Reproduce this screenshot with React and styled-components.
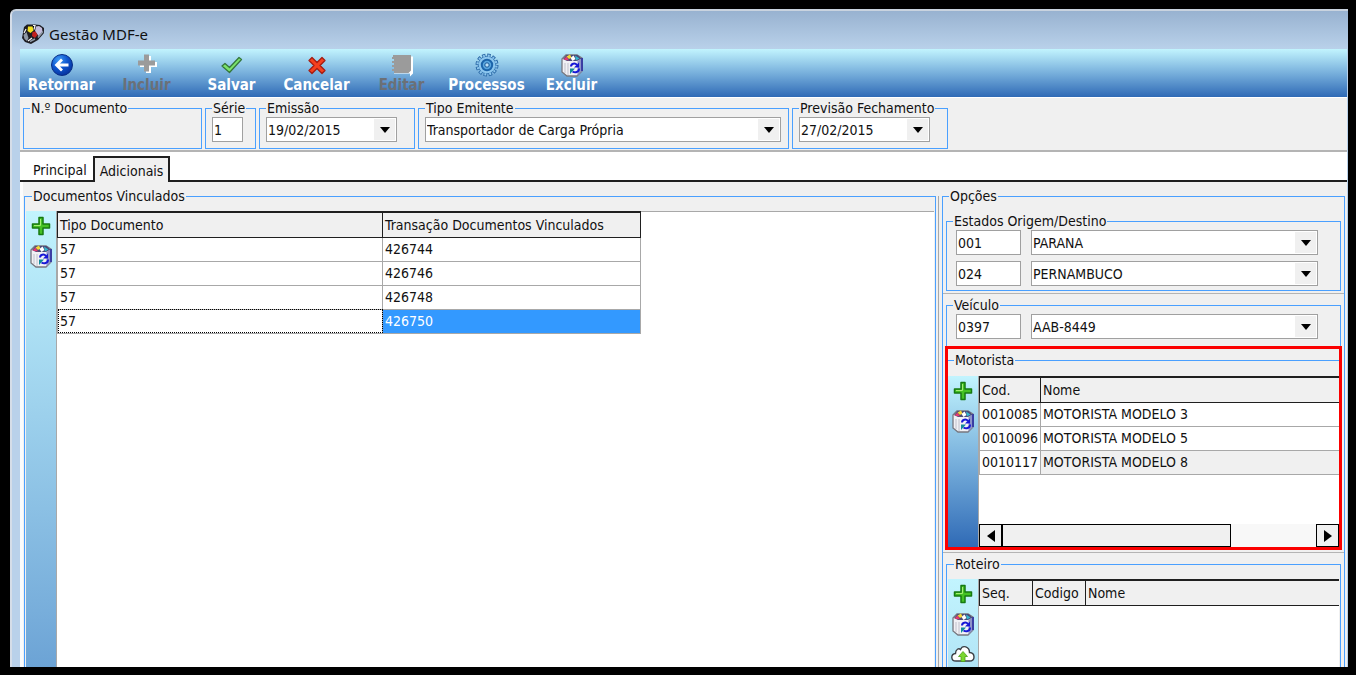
import React from "react";
import styled, { createGlobalStyle, css } from "styled-components";

const documents = ["426744", "426746", "426748", "426750"];

const drivers = [
  { code: "0010085", name: "MOTORISTA MODELO 3" },
  { code: "0010096", name: "MOTORISTA MODELO 5" },
  { code: "0010117", name: "MOTORISTA MODELO 8" }
];

const BackIcon = () => (
  <svg width="24" height="24" viewBox="0 0 24 24">
    <defs>
      <radialGradient id="back" cx="35%" cy="25%" r="80%">
        <stop offset="0" stopColor="#3f9bf5" />
        <stop offset="0.5" stopColor="#0f57cf" />
        <stop offset="1" stopColor="#06309c" />
      </radialGradient>
    </defs>
    <circle cx="12" cy="12" r="10.5" fill="url(#back)" stroke="#0a2f86" />
    <path
      d="M18.500 12H7M12 6.500L6.500 12l5.500 5.500"
      fill="none"
      stroke="#fff"
      strokeWidth="2.800"
    />
  </svg>
);

const PlusIcon = ({ disabled }) => (
  <svg width="22" height="22" viewBox="0 0 22 22">
    {disabled ? (
      <>
        <path d="M10 3h5v6h6v5h-6v6h-5v-6H4V9h6z" fill="#fff" />
        <path d="M8 1.500h5v6h6v5h-6v6H8v-6H2v-5h6z" fill="#9b9b9b" />
      </>
    ) : (
      <>
        <path
          d="M9 2.500h4V9h6.500v4H13v6.500H9V13H2.500V9H9z"
          fill="#45c224"
          stroke="#177a12"
          strokeWidth="1.500"
          strokeLinejoin="round"
        />
        <path d="M10.500 4v6.500H4" fill="none" stroke="#a5ee75" />
      </>
    )}
  </svg>
);

const CheckIcon = () => (
  <svg width="24" height="24" viewBox="0 0 24 24">
    <path
      d="M2 13l3-2.500 4.500 4L19 4.500l2.500 2L9.500 19.500z"
      fill="#7be36b"
      stroke="#35763c"
      strokeWidth="1.300"
      strokeLinejoin="round"
    />
  </svg>
);

const CancelIcon = () => (
  <svg width="24" height="24" viewBox="0 0 24 24">
    <path
      d="M7 4.500l5 5 5-5L20 7.500l-5 5 5 5-3 3-5-5-5 5-3-3 5-5-5-5z"
      fill="#f5401f"
      stroke="#a51c12"
      strokeWidth="1.300"
      strokeLinejoin="round"
    />
  </svg>
);

const NoteIcon = () => (
  <svg width="24" height="24" viewBox="0 0 24 24">
    <path d="M4 3.500h19v17l-3 3v-3H4z" fill="#fff" />
    <path
      d="M3 2h18v15.500L18.500 20H4v-2H2v-2h2v-2H2v-2h2v-2H2V8h2V6H2V4h1z"
      fill="#9b9b9b"
    />
  </svg>
);

const GearIcon = () => (
  <svg width="24" height="24" viewBox="0 0 24 24">
    <circle
      cx="12"
      cy="12"
      r="9.500"
      fill="none"
      stroke="#2a68a6"
      strokeWidth="4"
      strokeDasharray="3.200 1.770"
    />
    <circle cx="12" cy="12" r="8.800" fill="#8cc6ee" stroke="#3a7ab5" />
    <circle
      cx="12"
      cy="12"
      r="9.500"
      fill="none"
      stroke="#8cc6ee"
      strokeWidth="2.200"
      strokeDasharray="1.800 3.170"
      strokeDashoffset="-0.700"
    />
    <circle
      cx="12"
      cy="12"
      r="5.200"
      fill="#5aa7e0"
      stroke="#1c64aa"
      strokeWidth="2"
    />
    <circle cx="12" cy="12" r="2.200" fill="#b9e0f8" stroke="#1a5796" />
  </svg>
);

const BinIcon = () => (
  <svg width="24" height="24" viewBox="0 0 24 24">
    <path
      d="M2 6l4-4h11l5 3v13l-5 5H7l-5-4z"
      fill="#f1f1f5"
      stroke="#77777f"
      strokeWidth="1.300"
    />
    <path d="M17.500 8L22 5v13l-4.500 4.500z" fill="#8d93c8" />
    <path d="M22 5v13" stroke="#20209c" strokeWidth="1.500" />
    <path d="M5 10v10M8 10v12" stroke="#c9c9d2" strokeWidth="1.200" />
    <path d="M3 6l3.500-4h11l4 3.500L17 8H7z" fill="#4a4a78" />
    <path d="M3.500 6.500l3-3 2.500 4z" fill="#e83a6f" />
    <path d="M6.500 3.500l3.500-2 1.500 3-2.500 1.500z" fill="#f5d735" />
    <path d="M10.500 5l3-2.500 2 3.500-3 2z" fill="#fff" />
    <path d="M15 2.500l4.500 3-3.500 2z" fill="#32b6cf" />
    <path
      d="M11 13.500c0-3 4-4 6-1.500M19 15.500c0 4-4 4.500-6.500 3"
      fill="none"
      stroke="#1717d6"
      strokeWidth="2"
    />
    <path d="M19 9.500v5h-5z" fill="#1717d6" />
    <path d="M10 15.500h5l-5 5.500z" fill="#128a9c" />
  </svg>
);

const CloudIcon = () => (
  <svg width="24" height="20" viewBox="0 0 24 20">
    <path
      d="M5 17c-5.500 0-5.500-7-.5-7.500C4.500 5 8 4 9.500 5.500c2-5 9-3 9 3 6 .5 6 8.500 0 8.500z"
      fill="#fff"
      stroke="#3b3f45"
      strokeWidth="1.400"
    />
    <path
      d="M12 7.500l4.500 5H14v5h-4v-5H7.500z"
      fill="#79d62e"
      stroke="#4d9e1b"
      strokeWidth="0.800"
    />
  </svg>
);

const AppIcon = () => (
  <svg width="23" height="20" viewBox="0 0 23 20">
    <path d="M2 3l3-2.500h8l5 .5 4 3v5l-6 7-7 4-6-2-3-4z" fill="#1d1d22" />
    <path d="M1.500 11l3-3 2 6-1.500 3-2.500-2z" fill="#8e99a6" />
    <path d="M6 2.500h4.500l1 4-3 2.500-3-2z" fill="#f4e21f" />
    <path d="M4 5l-2 4M11 1.500h2l-1 4M6 17l4-3" stroke="#f3f3f3" strokeWidth="1.200" />
    <path d="M14 2.500l3-.5 3 2 .5 4-4 4-3.500-5z" fill="#c3bcdc" />
    <path d="M10.500 8l3-.5 2 3.500-2.500 3-3-2z" fill="#c3201d" />
    <path d="M8 17.500l5-2.500M16 13.500l5-6" stroke="#8e99a6" strokeWidth="1.500" />
  </svg>
);

const Arrow = () => (
  <svg width="10" height="6" viewBox="0 0 10 6">
    <path d="M0 0h10L5 6z" fill="#000" />
  </svg>
);

const ScrollArrow = ({ right }) => (
  <svg width="8" height="12" viewBox="0 0 8 12">
    <path d={right ? "M0 0v12l8-6z" : "M8 0v12L0 6z"} fill="#000" />
  </svg>
);

const toolbar = [
  { label: "Retornar", icon: <BackIcon /> },
  { label: "Incluir", icon: <PlusIcon disabled />, disabled: true },
  { label: "Salvar", icon: <CheckIcon /> },
  { label: "Cancelar", icon: <CancelIcon /> },
  { label: "Editar", icon: <NoteIcon />, disabled: true },
  { label: "Processos", icon: <GearIcon /> },
  { label: "Excluir", icon: <BinIcon /> }
];

const Combo = ({ label, value, width }) => (
  <ComboBox $width={width}>
    <Select aria-label={label} defaultValue={value}>
      <option>{value}</option>
    </Select>
    <ComboArrow>
      <Arrow />
    </ComboArrow>
  </ComboBox>
);

const SideActions = ({ upload, short }) => (
  <SideBar $short={short}>
    <IconButton type="button" aria-label="Incluir item">
      <PlusIcon />
    </IconButton>
    <IconButton type="button" aria-label="Excluir item">
      <BinIcon />
    </IconButton>
    {upload && (
      <IconButton type="button" aria-label="Enviar">
        <CloudIcon />
      </IconButton>
    )}
  </SideBar>
);

export default function App() {
  return (
    <Screen>
      <GlobalStyle />
      <Window>
        <TitleBar>
          <AppIcon />
          <Title>Gestão MDF-e</Title>
        </TitleBar>
        <Content>
          <ToolBar>
            {toolbar.map(({ label, icon, disabled }) => (
              <ToolButton key={label} type="button" disabled={disabled}>
                {icon}
                {label}
              </ToolButton>
            ))}
          </ToolBar>

          <Header>
            <Group $width={179}>
              <Legend>N.º Documento</Legend>
            </Group>
            <Group $width={51}>
              <Legend>Série</Legend>
              <Fields>
                <Input aria-label="Série" defaultValue="1" $width={31} />
              </Fields>
            </Group>
            <Group $width={156}>
              <Legend>Emissão</Legend>
              <Fields>
                <Combo label="Emissão" value="19/02/2015" width={131} />
              </Fields>
            </Group>
            <Group $width={371}>
              <Legend>Tipo Emitente</Legend>
              <Fields>
                <Combo
                  label="Tipo Emitente"
                  value="Transportador de Carga Própria"
                  width={356}
                />
              </Fields>
            </Group>
            <Group $width={156}>
              <Legend>Previsão Fechamento</Legend>
              <Fields>
                <Combo
                  label="Previsão Fechamento"
                  value="27/02/2015"
                  width={131}
                />
              </Fields>
            </Group>
          </Header>

          <Tabs role="tablist">
            <Tab type="button" role="tab" aria-selected="false">
              Principal
            </Tab>
            <Tab type="button" role="tab" aria-selected="true" $active>
              Adicionais
            </Tab>
          </Tabs>

          <Body>
            <Documents>
              <Legend>Documentos Vinculados</Legend>
              <Panel>
                <SideActions />
                <TableArea>
                  <Table $width="584px">
                    <colgroup>
                      <col width="325" />
                      <col />
                    </colgroup>
                    <thead>
                      <tr>
                        <Th>Tipo Documento</Th>
                        <Th>Transação Documentos Vinculados</Th>
                      </tr>
                    </thead>
                    <tbody>
                      {documents.map((number, i) => {
                        const selected = i === documents.length - 1;
                        return (
                          <tr key={number}>
                            <Td $focused={selected}>57</Td>
                            <Td $selected={selected}>{number}</Td>
                          </tr>
                        );
                      })}
                    </tbody>
                  </Table>
                </TableArea>
              </Panel>
            </Documents>

            <Options>
              <Legend>Opções</Legend>
              <OptionGroup>
                <Legend>Estados Origem/Destino</Legend>
                <OptionRows>
                  <OptionRow>
                    <Input aria-label="Código origem" defaultValue="001" />
                    <Combo label="Estado origem" value="PARANA" />
                  </OptionRow>
                  <OptionRow>
                    <Input aria-label="Código destino" defaultValue="024" />
                    <Combo label="Estado destino" value="PERNAMBUCO" />
                  </OptionRow>
                </OptionRows>
              </OptionGroup>
              <Divider />
              <OptionGroup $open>
                <Legend>Veículo</Legend>
                <OptionRows>
                  <OptionRow>
                    <Input aria-label="Código veículo" defaultValue="0397" />
                    <Combo label="Veículo" value="AAB-8449" />
                  </OptionRow>
                </OptionRows>
              </OptionGroup>

              <Highlight>
                <DriverGroup>
                  <Legend>Motorista</Legend>
                  <Panel>
                    <SideActions short />
                    <TableArea $height={171}>
                      <Table $width="100%" $wide>
                        <colgroup>
                          <col width="61" />
                          <col />
                        </colgroup>
                        <thead>
                          <tr>
                            <Th>Cod.</Th>
                            <Th>Nome</Th>
                          </tr>
                        </thead>
                        <tbody>
                          {drivers.map(({ code, name }, i) => (
                            <tr key={code}>
                              <Td>{code}</Td>
                              <Td $muted={i === 2}>{name}</Td>
                            </tr>
                          ))}
                        </tbody>
                      </Table>
                      <ScrollBar>
                        <ScrollButton type="button" aria-label="Esquerda">
                          <ScrollArrow />
                        </ScrollButton>
                        <ScrollTrack>
                          <ScrollThumb />
                        </ScrollTrack>
                        <ScrollButton type="button" aria-label="Direita">
                          <ScrollArrow right />
                        </ScrollButton>
                      </ScrollBar>
                    </TableArea>
                  </Panel>
                </DriverGroup>
              </Highlight>
              <Divider />

              <RouteGroup>
                <Legend>Roteiro</Legend>
                <Panel>
                  <SideActions upload />
                  <TableArea>
                    <Table $width="100%" $wide>
                      <colgroup>
                        <col width="53" />
                        <col width="53" />
                        <col />
                      </colgroup>
                      <thead>
                        <tr>
                          <Th>Seq.</Th>
                          <Th>Codigo</Th>
                          <Th>Nome</Th>
                        </tr>
                      </thead>
                    </Table>
                  </TableArea>
                </Panel>
              </RouteGroup>
            </Options>
          </Body>
        </Content>
      </Window>
    </Screen>
  );
}

const GlobalStyle = createGlobalStyle`
  * {
    box-sizing: border-box;
  }
  body {
    margin: 0;
    background: #000;
    color: #111;
    font-family: "DejaVu Sans Condensed", "DejaVu Sans", sans-serif;
    font-size: 14px;
    line-height: 16px;
  }
  svg {
    display: block;
    flex: none;
  }
  button, input, select {
    font: inherit;
    color: inherit;
  }
`;

const Screen = styled.main`
  display: flex;
  height: 100vh;
  padding: 9px 8px 8px 10px;
  background: #000;
`;

const Window = styled.div`
  display: flex;
  flex: 1;
  flex-direction: column;
  min-width: 0;
  overflow: hidden;
  padding: 0 1px 0 8px;
  border-left: 2px solid #d5dde8;
  border-top: 2px solid #c9d3df;
  border-top-left-radius: 6px;
  background: linear-gradient(#98b2d0, #b9d1ea 38px);
`;

const TitleBar = styled.header`
  display: flex;
  align-items: center;
  gap: 4px;
  height: 38px;
  padding: 7px 2px 0;
`;

const Title = styled.h1`
  margin: 0;
  font-family: "Noto Sans", sans-serif;
  font-size: 15px;
  font-weight: normal;
  line-height: 20px;
`;

const Content = styled.div`
  display: flex;
  flex: 1;
  flex-direction: column;
  min-height: 0;
  background: #f0f0f0;
`;

const ToolBar = styled.nav`
  display: flex;
  gap: 2px;
  height: 48px;
  background: linear-gradient(#c2f4fe, #78b0dc 50%, #2f6ab6);
`;

const ToolButton = styled.button`
  display: flex;
  flex-direction: column;
  align-items: center;
  justify-content: space-between;
  width: 83px;
  padding: 4px 0;
  border: 0;
  background: none;
  color: #fff;
  font-size: 15px;
  font-weight: bold;
  line-height: 16px;

  &:disabled {
    color: #6b7077;
  }
`;

const Header = styled.div`
  display: flex;
  gap: 3px;
  padding: 2px 3px 1px;
  border-top: 1px solid #fff;
  border-bottom: 2px solid #b4b4b4;
`;

const Group = styled.fieldset`
  min-width: 0;
  width: ${props => props.$width}px;
  min-height: 49px;
  margin: 0;
  padding: 0;
  border: 1px solid #4aa0ff;
`;

const Legend = styled.legend`
  margin-left: 6px;
  padding: 0 1px;
  white-space: nowrap;
`;

const Fields = styled.div`
  display: flex;
  padding: 1px 6px 0;
`;

const control = css`
  height: 25px;
  border: 1px solid #a0a0a0;
  background: #fff;
`;

const Input = styled.input`
  ${control}
  width: ${props => props.$width || 65}px;
  padding: 0 1px;
  border-radius: 0;
  outline: 0;
`;

const ComboBox = styled.div`
  ${control}
  display: grid;
  grid-template-columns: 1fr 21px;
  width: ${props => (props.$width ? `${props.$width}px` : "auto")};
  padding: 1px;
`;

const Select = styled.select`
  grid-area: 1 / 1 / 2 / 3;
  min-width: 0;
  padding: 0 20px 0 0;
  border: 0;
  outline: 0;
  appearance: none;
  background: #fff;
`;

const ComboArrow = styled.span`
  grid-area: 1 / 2;
  display: flex;
  align-items: center;
  justify-content: center;
  background: #f0f0f0;
  pointer-events: none;
`;

const Tabs = styled.div`
  display: flex;
  align-items: flex-end;
  height: 30px;
  padding-left: 3px;
  background: linear-gradient(#1f1f1f, #1f1f1f) bottom / 100% 2px no-repeat #fff;
`;

const Tab = styled.button`
  height: 26px;
  padding: 2px 5px 0;
  border: 2px solid #1f1f1f;
  border-width: ${props => (props.$active ? "2px 2px 0" : "0 0 2px")};
  background: ${props => (props.$active ? "#f0f0f0" : "#fff")};

  ${props =>
    !props.$active &&
    css`
      padding: 4px 6px 0 10px;
    `}
`;

const Body = styled.div`
  display: grid;
  grid-template-columns: 1fr 409px;
  flex: 1;
  min-height: 0;
  padding-top: 6px;
  border-left: 3px solid #fcfcfc;
`;

const Documents = styled.fieldset`
  display: flex;
  min-width: 0;
  margin: 0 2px 0 1px;
  padding: 7px 1px 0;
  border: 1px solid #4aa0ff;
  border-bottom: 0;
`;

const Options = styled.fieldset`
  display: flex;
  flex-direction: column;
  min-width: 0;
  margin: 0 2px 0 4px;
  padding: 9px 0 0;
  border: 1px solid #4aa0ff;
  border-bottom: 0;
  box-shadow: -3px 0 0 #f0f0f0, -4px 0 0 #a8a8a8;
`;

const Panel = styled.div`
  display: flex;
  flex: 1;
  min-width: 0;
`;

const SideBar = styled.div`
  display: flex;
  flex-direction: column;
  align-items: center;
  gap: 6px;
  width: 30px;
  padding-top: 3px;
  background: ${props =>
    props.$short
      ? "linear-gradient(#c2f4fe, #78b0dc 50%, #2f6ab6)"
      : "linear-gradient(#c2f4fe, #78aedb 400px, #6ca3d5 456px)"};
`;

const IconButton = styled.button`
  display: flex;
  align-items: center;
  justify-content: center;
  width: 24px;
  height: 24px;
  padding: 0;
  border: 0;
  background: none;
`;

const TableArea = styled.div`
  display: flex;
  flex: 1;
  flex-direction: column;
  justify-content: space-between;
  align-items: flex-start;
  min-width: 0;
  min-height: ${props => props.$height || 0}px;
  border-left: 1px solid #a8a8a8;
  background: linear-gradient(#a8a8a8, #a8a8a8) top / 100% 1px no-repeat #fff;
`;

const Th = styled.th`
  height: 25px;
  padding: 0 2px;
  border: 1px solid #1f1f1f;
  border-top-width: 2px;
  background: #f0f0f0;
  font-weight: normal;
  text-align: left;
`;

const Td = styled.td`
  height: 24px;
  padding: 0 2px;
  border: 1px solid #a8a8a8;
  background: ${props => (props.$muted ? "#f0f0f0" : "#fff")};
  white-space: nowrap;

  ${props =>
    props.$focused &&
    css`
      outline: 1px dotted #000;
      outline-offset: -1px;
    `}

  ${props =>
    props.$selected &&
    css`
      background: #3399ff;
      color: #fff;
    `}
`;

const Table = styled.table`
  width: ${props => props.$width};
  border-collapse: collapse;
  table-layout: fixed;

  ${props =>
    props.$wide &&
    css`
      ${Th}:last-child, ${Td}:last-child {
        border-right: 0;
      }
    `}
`;

const OptionGroup = styled.fieldset`
  min-width: 0;
  margin: 0 3px;
  padding: 0 0 ${props => (props.$open ? 7 : 4)}px;
  border: 1px solid #4aa0ff;
  border-bottom-width: ${props => (props.$open ? 0 : 1)}px;
`;

const OptionRows = styled.div`
  display: flex;
  flex-direction: column;
  gap: 6px;
  padding: 1px 22px 0 9px;
`;

const OptionRow = styled.div`
  display: grid;
  grid-template-columns: 65px 1fr;
  gap: 10px;
`;

const Divider = styled.hr`
  width: 100%;
  margin: 2px 0 3px;
  border: 0;
  border-top: 1px solid #b4b4b4;
`;

const Highlight = styled.div`
  margin: 0 2px;
  border: 3px solid #fb0000;
`;

const DriverGroup = styled.fieldset`
  display: flex;
  min-width: 0;
  margin: 3px 0 0;
  padding: 8px 0 0;
  border: 0;
  border-top: 1px solid #4aa0ff;
`;

const RouteGroup = styled.fieldset`
  display: flex;
  flex: 1;
  min-width: 0;
  margin: 0 3px;
  padding: 7px 1px 0;
  border: 1px solid #4aa0ff;
  border-bottom: 0;
`;

const ScrollBar = styled.div`
  display: flex;
  width: 100%;
  height: 23px;
  background: #f8f8f8;
`;

const ScrollButton = styled.button`
  display: flex;
  align-items: center;
  justify-content: center;
  width: 23px;
  padding: 0;
  border: 1px solid #000;
  background: #f0f0f0;
`;

const ScrollTrack = styled.div`
  display: flex;
  flex: 1;
`;

const ScrollThumb = styled.div`
  width: 73%;
  border: 1px solid #000;
  background: #f0f0f0;
`;
